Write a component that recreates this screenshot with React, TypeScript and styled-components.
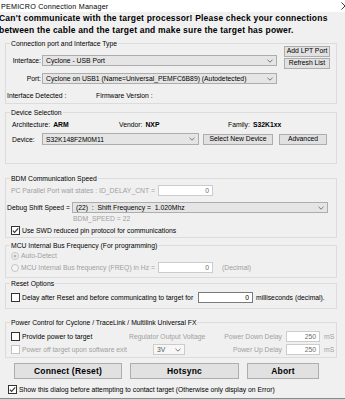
import React from "react"
import styled, { createGlobalStyle } from "styled-components"

const grey = "#a0a0a0"

const GlobalStyle = createGlobalStyle`
  html, body {
    margin: 0;
    padding: 0;
  }
  body {
    background: #f0f0f0;
    font-family: "Liberation Sans", Arial, sans-serif;
    font-size: 6.8px;
    color: #000;
  }
`

const Window = styled.div`
  width: 345px;
  height: 400px;
  overflow: hidden;
  background: #f0f0f0;
  display: flex;
  flex-direction: column;
`

const TitleBar = styled.div`
  flex-shrink: 0;
  height: 12px;
  background: #fff;
  display: flex;
  align-items: center;
  justify-content: space-between;
  padding-left: 1px;
  font-size: 7.2px;
  letter-spacing: 0.2px;
  white-space: nowrap;
`

const CloseGlyph = styled.svg`
  margin-right: -4px;
`

const Message = styled.div`
  flex-shrink: 0;
  height: 24px;
  margin-left: -1px;
  font-size: 8.5px;
  font-weight: bold;
  letter-spacing: 0.2px;
  line-height: 12px;
  white-space: nowrap;
`

const Group = styled.div<{ $h: number; $mt: number }>`
  position: relative;
  flex-shrink: 0;
  box-sizing: border-box;
  margin: ${(p) => p.$mt}px 0 0 5px;
  width: 332px;
  height: ${(p) => p.$h}px;
  border: 1px solid #dcdcdc;
`

const Legend = styled.span`
  position: absolute;
  top: -5px;
  left: 4px;
  padding: 0 1px;
  background: #f0f0f0;
  line-height: 9px;
  white-space: nowrap;
`

const Row = styled.div<{ $mt?: number; $h: number; $pl?: number }>`
  display: flex;
  align-items: center;
  margin-top: ${(p) => p.$mt ?? 0}px;
  height: ${(p) => p.$h}px;
  padding-left: ${(p) => p.$pl ?? 0}px;
  white-space: nowrap;
`

const Text = styled.span<{ $w?: number; $right?: boolean; $grey?: boolean; $ml?: number; $pl?: number }>`
  display: inline-block;
  flex-shrink: 0;
  box-sizing: border-box;
  ${(p) => (p.$w ? `width: ${p.$w}px;` : "")}
  text-align: ${(p) => (p.$right ? "right" : "left")};
  color: ${(p) => (p.$grey ? grey : "#000")};
  margin-left: ${(p) => p.$ml ?? 0}px;
  padding-left: ${(p) => p.$pl ?? 0}px;
  white-space: pre;
`

const Value = styled.b`
  margin-left: 3px;
`

const Combo = styled.div<{ $w: number; $h: number; $ml?: number; $disabled?: boolean }>`
  box-sizing: border-box;
  flex-shrink: 0;
  width: ${(p) => p.$w}px;
  height: ${(p) => p.$h}px;
  margin-left: ${(p) => p.$ml ?? 0}px;
  border: 1px solid ${(p) => (p.$disabled ? "#cccccc" : "#adadad")};
  background: ${(p) => (p.$disabled ? "#f7f7f7" : "#e5e5e5")};
  color: ${(p) => (p.$disabled ? "#555" : "#000")};
  display: flex;
  align-items: center;
  justify-content: space-between;
  padding: 0 3px 0 3px;
  white-space: pre;
`

const Btn = styled.button<{ $w: number; $h: number; $ml?: number; $mt?: number; $big?: boolean }>`
  box-sizing: border-box;
  flex-shrink: 0;
  width: ${(p) => p.$w}px;
  height: ${(p) => p.$h}px;
  margin: ${(p) => p.$mt ?? 0}px 0 0 ${(p) => p.$ml ?? 0}px;
  padding: 0;
  border: 1px solid #adadad;
  background: #e1e1e1;
  color: #000;
  font-family: inherit;
  font-size: ${(p) => (p.$big ? "8.5px" : "6.8px")};
  font-weight: ${(p) => (p.$big ? "bold" : "normal")};
  letter-spacing: ${(p) => (p.$big ? "0.2px" : "0")};
  line-height: 1;
  display: flex;
  align-items: center;
  justify-content: center;
  white-space: nowrap;
`

const Edit = styled.div<{ $w: number; $h: number; $disabled?: boolean }>`
  box-sizing: border-box;
  flex-shrink: 0;
  width: ${(p) => p.$w}px;
  height: ${(p) => p.$h}px;
  background: #fff;
  border: 1px solid ${(p) => (p.$disabled ? "#cccccc" : "#7a7a7a")};
  color: ${(p) => (p.$disabled ? "#6d6d6d" : "#000")};
  text-align: right;
  padding-right: 3px;
  line-height: ${(p) => p.$h - 2}px;
`

const G1Body = styled.div`
  display: flex;
`

const G1Fields = styled.div`
  display: flex;
  flex-direction: column;
`

const ButtonStack = styled.div`
  display: flex;
  flex-direction: column;
  margin-left: 7px;
`

const PowerGrid = styled.div`
  display: grid;
  grid-template-columns: 123px 95px 62px 34px auto;
  grid-template-rows: 11px 11px;
  row-gap: 2px;
  margin-top: 8px;
  align-items: center;
  white-space: nowrap;
`

const Cell = styled.div<{ $pl?: number; $right?: boolean; $grey?: boolean }>`
  display: flex;
  align-items: center;
  justify-content: ${(p) => (p.$right ? "flex-end" : "flex-start")};
  padding-left: ${(p) => p.$pl ?? 0}px;
  padding-right: ${(p) => (p.$right ? 4 : 0)}px;
  color: ${(p) => (p.$grey ? grey : "#000")};
`

const ActionRow = styled.div`
  flex-shrink: 0;
  display: flex;
  gap: 8px;
  margin-top: 5px;
  padding-left: 14px;
  height: 16px;
`

const Footer = styled.div`
  flex-shrink: 0;
  display: flex;
  align-items: center;
  margin-top: 6px;
  padding-left: 8px;
  height: 9px;
  white-space: nowrap;
`

const BottomEdge = styled.div`
  flex-shrink: 0;
  margin-top: 4px;
  height: 1px;
  background: #8a8a8a;
  border-bottom: 1px solid #d0d0d0;
`

const BoxSvg = styled.svg`
  flex-shrink: 0;
  display: block;
`

const Chevron = () => (
  <svg width="6" height="4" viewBox="0 0 6 4">
    <polyline points="0.5,0.8 3,3.2 5.5,0.8" fill="none" stroke="#6a6a6a" strokeWidth="0.9" />
  </svg>
)

const CheckBox = ({ checked, disabled }: { checked?: boolean; disabled?: boolean }) => (
  <BoxSvg width="9" height="9" viewBox="0 0 9 9">
    <rect x="0.5" y="0.5" width="8" height="8" fill="#fff" stroke={disabled ? "#c4c4c4" : "#333"} />
    {checked ? (
      <polyline points="1.8,4.6 3.6,6.4 7.2,2.4" fill="none" stroke="#333" strokeWidth="1.1" />
    ) : null}
  </BoxSvg>
)

const Radio = ({ checked }: { checked?: boolean }) => (
  <BoxSvg width="8" height="8" viewBox="0 0 8 8">
    <circle cx="4" cy="4" r="3.5" fill="#f4f4f4" stroke="#c4c4c4" />
    {checked ? <circle cx="4" cy="4" r="1.6" fill="#b8b8b8" /> : null}
  </BoxSvg>
)

export default function App() {
  return (
    <>
      <GlobalStyle />
      <Window>
        <TitleBar>
          <span>PEMICRO Connection Manager</span>
          <CloseGlyph width="8" height="8" viewBox="0 0 8 8">
            <path d="M0.5 0.5 L7.5 7.5 M7.5 0.5 L0.5 7.5" stroke="#222" strokeWidth="0.9" />
          </CloseGlyph>
        </TitleBar>

        <Message>
          Can't communicate with the target processor! Please check your connections
          <br />
          between the cable and the target and make sure the target has power.
        </Message>

        <Group $h={61} $mt={7}>
          <Legend>Connection port and Interface Type</Legend>
          <G1Body>
            <G1Fields>
              <Row $mt={11} $h={11}>
                <Text $w={35} $right>Interface:</Text>
                <Combo $w={235} $h={11} $ml={1}>
                  <span>Cyclone - USB Port</span>
                  <Chevron />
                </Combo>
              </Row>
              <Row $mt={7} $h={11}>
                <Text $w={35} $right>Port:</Text>
                <Combo $w={235} $h={11} $ml={1}>
                  <span>Cyclone on USB1 (Name=Universal_PEMFC6B89) (Autodetected)</span>
                  <Chevron />
                </Combo>
              </Row>
              <Row $mt={7} $h={8} $pl={1}>
                <Text $w={89}>Interface Detected :</Text>
                <Text>Firmware Version :</Text>
              </Row>
            </G1Fields>
            <ButtonStack>
              <Btn $w={46} $h={11} $mt={2}>Add LPT Port</Btn>
              <Btn $w={46} $h={11} $mt={1}>Refresh List</Btn>
            </ButtonStack>
          </G1Body>
        </Group>

        <Group $h={52} $mt={8}>
          <Legend>Device Selection</Legend>
          <Row $mt={6} $h={10} $pl={6}>
            <Text $w={107}>
              Architecture:<Value>ARM</Value>
            </Text>
            <Text $w={109}>
              Vendor:<Value>NXP</Value>
            </Text>
            <Text>
              Family:<Value>S32K1xx</Value>
            </Text>
          </Row>
          <Row $mt={4} $h={12}>
            <Text $w={36} $pl={6}>Device:</Text>
            <Combo $w={157} $h={12}>
              <span>S32K148F2M0M11</span>
              <Chevron />
            </Combo>
            <Btn $w={70} $h={11} $ml={4}>Select New Device</Btn>
            <Btn $w={48} $h={11} $ml={6}>Advanced</Btn>
          </Row>
        </Group>

        <Group $h={60} $mt={14}>
          <Legend>BDM Communication Speed</Legend>
          <Row $mt={6} $h={11}>
            <Text $w={152} $pl={5} $grey>PC Parallel Port wait states : ID_DELAY_CNT =</Text>
            <Edit $w={55} $h={11} $disabled>0</Edit>
          </Row>
          <Row $mt={6} $h={11}>
            <Text $w={66} $pl={1}>Debug Shift Speed =</Text>
            <Combo $w={256} $h={11}>
              <span>(22)  :  Shift Frequency =  1.020Mhz</span>
              <Chevron />
            </Combo>
          </Row>
          <Row $mt={1} $h={8} $pl={67}>
            <Text $grey>BDM_SPEED = 22</Text>
          </Row>
          <Row $mt={4} $h={9} $pl={5}>
            <CheckBox checked />
            <Text $ml={2}>Use SWD reduced pin protocol for communications</Text>
          </Row>
        </Group>

        <Group $h={33} $mt={7}>
          <Legend>MCU Internal Bus Frequency (For programming)</Legend>
          <Row $mt={5} $h={9} $pl={5}>
            <Radio checked />
            <Text $ml={2} $grey>Auto-Detect</Text>
          </Row>
          <Row $mt={2} $h={11} $pl={5}>
            <Radio />
            <Text $w={137} $ml={2} $grey>MCU Internal Bus frequency (FREQ) in Hz =</Text>
            <Edit $w={55} $h={11} $disabled>0</Edit>
            <Text $ml={9} $grey>(Decimal)</Text>
          </Row>
        </Group>

        <Group $h={26} $mt={5}>
          <Legend>Reset Options</Legend>
          <Row $mt={8} $h={11} $pl={5}>
            <CheckBox />
            <Text $w={176} $ml={2}>Delay after Reset and before communicating to target for</Text>
            <Edit $w={55} $h={11}>0</Edit>
            <Text $ml={3}>milliseconds (decimal).</Text>
          </Row>
        </Group>

        <Group $h={36} $mt={13}>
          <Legend>Power Control for Cyclone / TraceLink / Multilink Universal FX</Legend>
          <PowerGrid>
            <Cell $pl={5}>
              <CheckBox />
              <Text $ml={2}>Provide power to target</Text>
            </Cell>
            <Cell $grey>Regulator Output Voltage</Cell>
            <Cell $right $grey>Power Down Delay</Cell>
            <Edit $w={34} $h={11} $disabled>250</Edit>
            <Cell $pl={4} $grey>mS</Cell>

            <Cell $pl={5}>
              <CheckBox disabled />
              <Text $ml={2} $grey>Power off target upon software exit</Text>
            </Cell>
            <Cell $pl={24}>
              <Combo $w={32} $h={11} $disabled>
                <span>3V</span>
                <Chevron />
              </Combo>
            </Cell>
            <Cell $right $grey>Power Up Delay</Cell>
            <Edit $w={34} $h={11} $disabled>250</Edit>
            <Cell $pl={4} $grey>mS</Cell>
          </PowerGrid>
        </Group>

        <ActionRow>
          <Btn $w={108} $h={16} $big>Connect (Reset)</Btn>
          <Btn $w={109} $h={16} $big>Hotsync</Btn>
          <Btn $w={72} $h={16} $big>Abort</Btn>
        </ActionRow>

        <Footer>
          <CheckBox checked />
          <Text $ml={2}>Show this dialog before attempting to contact target (Otherwise only display on Error)</Text>
        </Footer>

        <BottomEdge />
      </Window>
    </>
  )
}
